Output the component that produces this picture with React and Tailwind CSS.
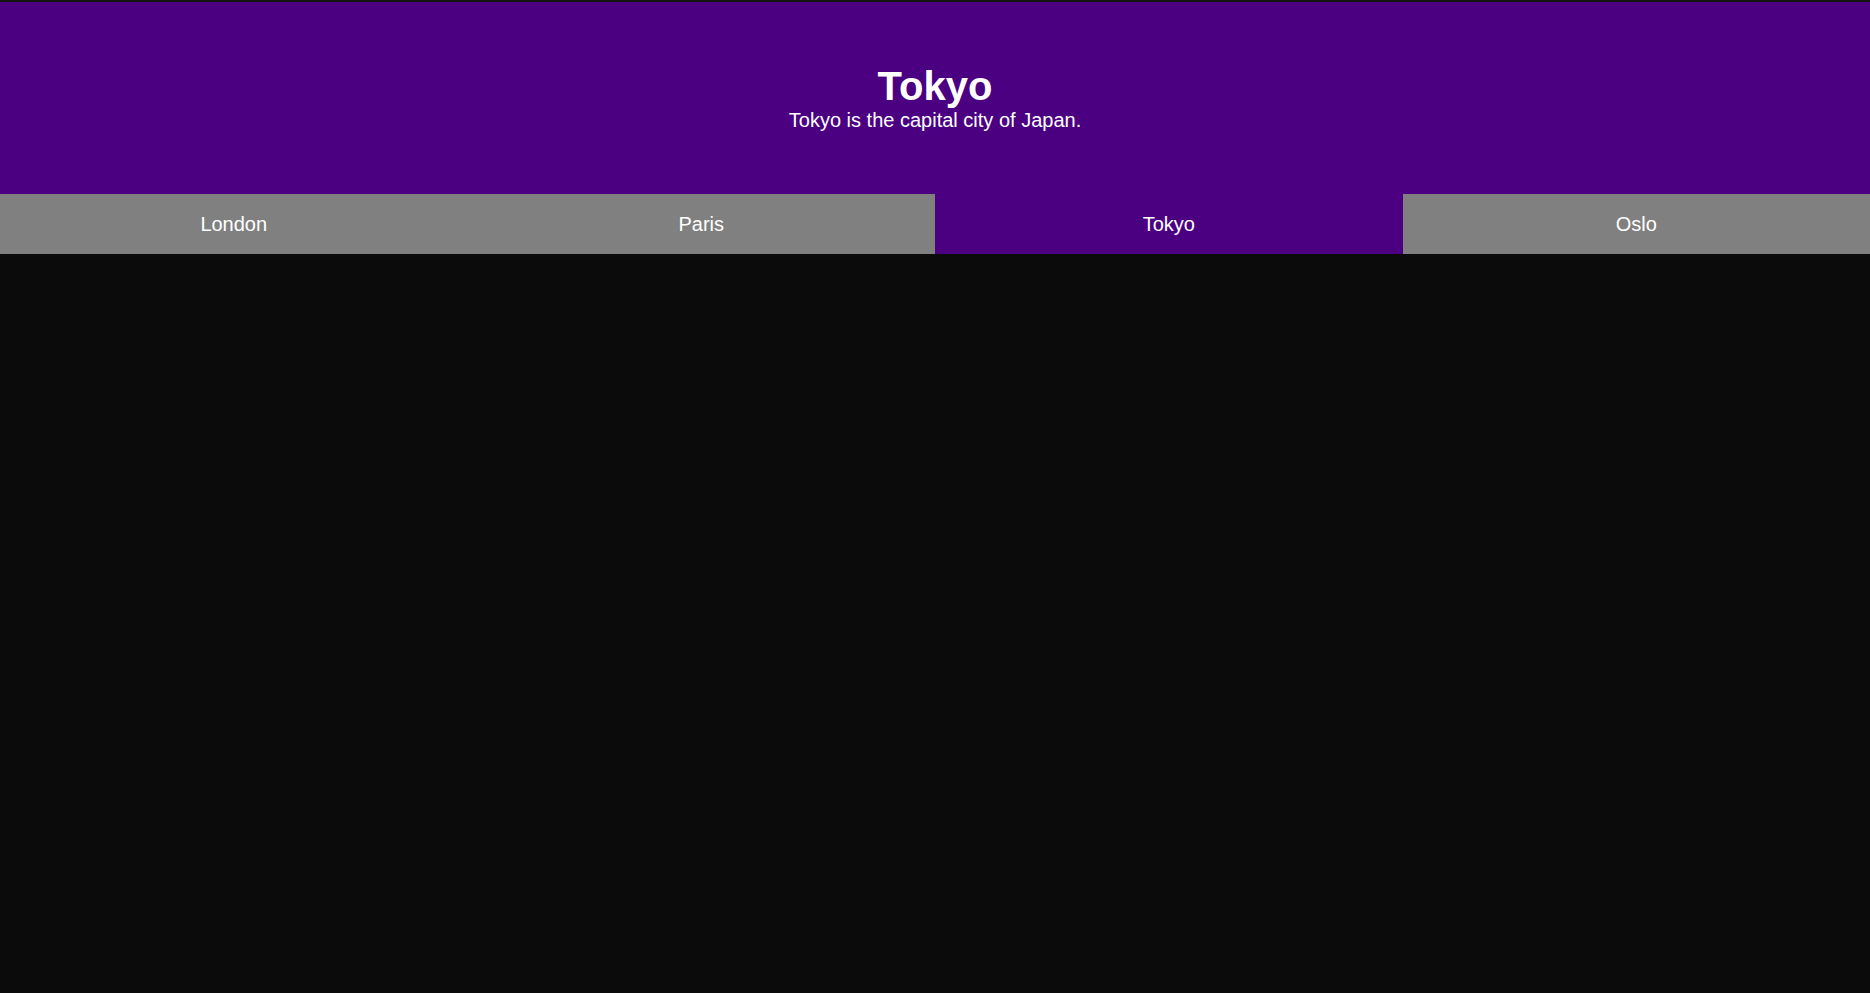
import React, { useState } from "react";

const CITIES = [
  { name: "London", text: "London is the capital city of England." },
  { name: "Paris", text: "Paris is the capital of France." },
  { name: "Tokyo", text: "Tokyo is the capital city of Japan." },
  { name: "Oslo", text: "Oslo is the capital of Norway." },
];

export default function App() {
  const [active, setActive] = useState("Tokyo");
  const city = CITIES.find((c) => c.name === active) || CITIES[0];

  return (
    <div className="min-h-screen bg-[#0b0b0b] text-white font-['Liberation_Sans',Arial,sans-serif]">
      {/* header */}
      <div className="h-[194px] bg-[#4b0082] border-t-2 border-[#141414] pt-[62px] text-center">
        <h1 className="text-[40px] leading-[45px] font-bold">{city.name}</h1>
        <p className="text-[20px] leading-[22px]">{city.text}</p>
      </div>

      {/* tabs */}
      <div className="grid grid-cols-4 h-[60px]">
        {CITIES.map((c) => (
          <button
            key={c.name}
            onClick={() => setActive(c.name)}
            className={`flex items-center justify-center text-[20px] text-white ${
              active === c.name ? "bg-[#4b0082]" : "bg-[#808080]"
            }`}
          >
            {c.name}
          </button>
        ))}
      </div>
    </div>
  );
}
